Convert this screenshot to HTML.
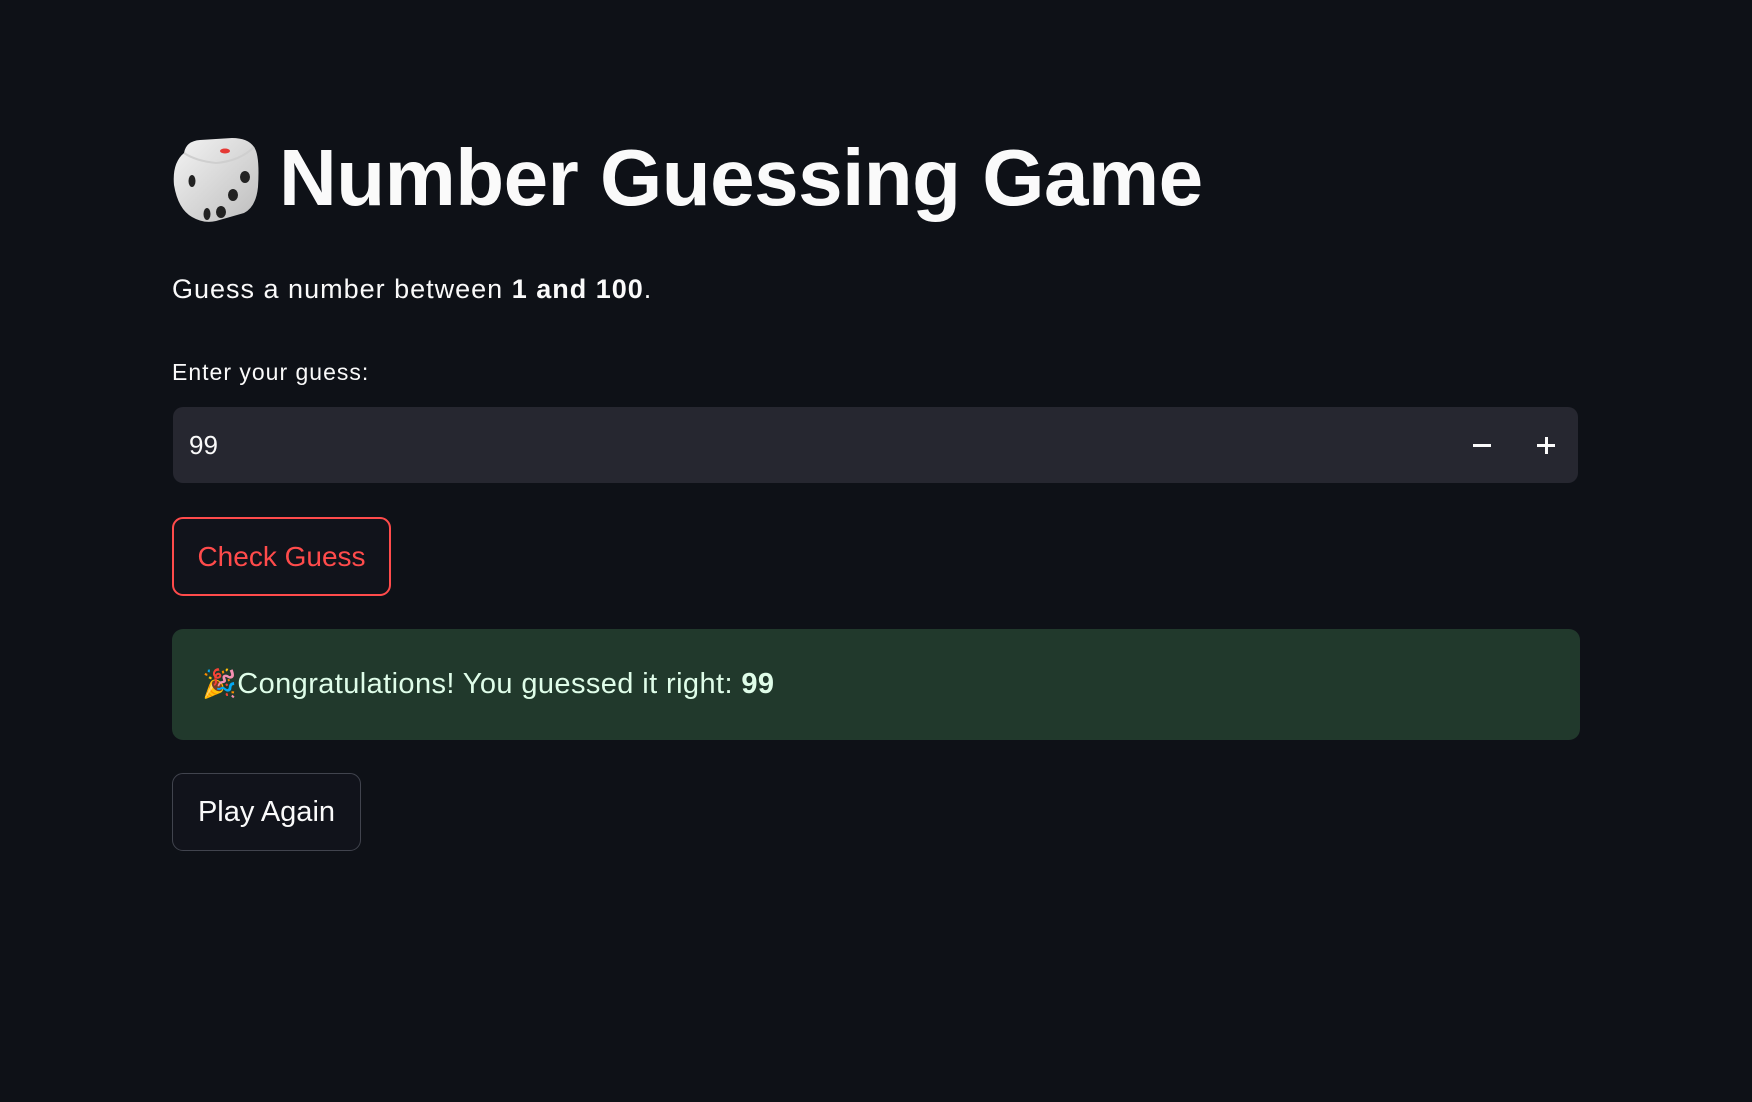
<!DOCTYPE html>
<html><head><meta charset="utf-8"><style>
html,body{margin:0;padding:0;background:#0e1117;width:1752px;height:1102px;overflow:hidden;font-family:"Liberation Sans",sans-serif;color:#fafafa}
.abs{position:absolute}
h1{position:absolute;left:172px;top:128px;margin:0;font-size:80px;font-weight:bold;line-height:100px;white-space:nowrap;letter-spacing:-0.5px}
</style></head><body>
<svg class="abs" style="left:170px;top:135px" width="92" height="90" viewBox="0 0 92 90">
<defs><linearGradient id="g" x1="0" y1="0" x2="1" y2="1"><stop offset="0" stop-color="#f4f4f4"/><stop offset="1" stop-color="#bdbdbd"/></linearGradient></defs>
<path d="M14 18 Q16 6 30 5 L62 3 Q78 3 84 12 Q90 20 88 52 Q86 72 74 78 L46 86 Q34 89 22 82 Q8 74 4 50 Q2 28 14 18Z" fill="url(#g)"/>
<path d="M14 18 Q26 26 46 28 Q70 26 84 12" fill="none" stroke="#cfcfcf" stroke-width="2"/>
<ellipse cx="55" cy="16" rx="5" ry="2.5" fill="#e53935"/>
<ellipse cx="22" cy="46" rx="3.5" ry="6" fill="#222"/><ellipse cx="37" cy="79" rx="3.5" ry="6" fill="#222"/>
<ellipse cx="75" cy="42" rx="5" ry="6" fill="#222"/>
<ellipse cx="63" cy="60" rx="5" ry="6" fill="#222"/>
<ellipse cx="51" cy="77" rx="5" ry="6" fill="#222"/>
</svg>
<h1 style="left:279px">Number Guessing Game</h1>
<div class="abs" style="left:172px;top:274px;font-size:27px;letter-spacing:1px">Guess a number between <b>1 and 100</b>.</div>
<div class="abs" style="left:172px;top:359px;font-size:23px;letter-spacing:1px">Enter your guess:</div>
<div class="abs" style="left:173px;top:407px;width:1405px;height:76px;background:#262730;border-radius:10px">
<div class="abs" style="left:16px;top:23px;font-size:26px">99</div>
<div class="abs" style="left:1300px;top:37px;width:18px;height:3px;background:#fafafa"></div>
<div class="abs" style="left:1364px;top:37px;width:18px;height:3px;background:#fafafa"></div>
<div class="abs" style="left:1371.5px;top:30px;width:3px;height:17px;background:#fafafa"></div>
</div>
<div class="abs" style="left:172px;top:517px;width:215px;height:75px;border:2px solid #ff4b4b;border-radius:11px;background:#11131b;color:#ff4b4b;font-size:28px;line-height:75px;text-align:center">Check Guess</div>
<div class="abs" style="left:172px;top:629px;width:1408px;height:111px;background:#21392c;border-radius:11px">
<div class="abs" style="left:30px;top:38px;font-size:29px;line-height:34px;color:#dffde9;white-space:nowrap;letter-spacing:0.4px"><span style="font-size:28px">🎉</span><span>Congratulations! You guessed it right: <b>99</b></span></div>
</div>
<div class="abs" style="left:172px;top:773px;width:187px;height:76px;border:1.5px solid #41444e;border-radius:11px;background:#11131b;font-size:29px;line-height:76px;text-align:center">Play Again</div>
</body></html>
